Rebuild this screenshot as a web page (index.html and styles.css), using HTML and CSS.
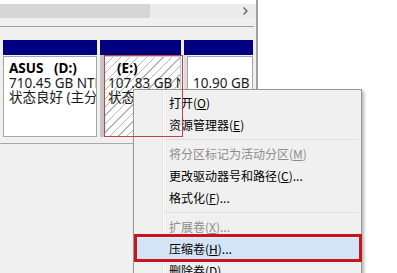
FILE: index.html
```html
<!DOCTYPE html>
<html lang="zh-CN">
<head>
    <meta charset="UTF-8">
    <title>磁盘管理</title>
    <link rel="stylesheet" href="styles.css">
</head>
<body>
    <div class="panel">
        <div class="top-strip"></div>
        <div class="hscroll">
            <div class="thumb"></div>
            <div class="track">
                <svg class="arrow" width="5" height="8" viewBox="0 0 5 8"><path d="M0.5 0.5 L4 4 L0.5 7.5" fill="none" stroke="#606060" stroke-width="1.3"/></svg>
            </div>
        </div>
        <div class="rule"></div>

        <!-- 磁盘分区 -->
        <div class="disk">
            <div class="part part-d">
                <div class="cap"></div>
                <div class="body">
                    <div class="box">
                        <div class="line name">ASUS&nbsp;&nbsp;&nbsp;(D:)</div>
                        <div class="line">710.45 GB NTFS</div>
                        <div class="line">状态良好 (主分区)</div>
                    </div>
                </div>
            </div>
            <div class="part part-e">
                <div class="cap"></div>
                <div class="body">
                    <div class="box hatched">
                        <div class="line name"><span class="indent">(E:)</span></div>
                        <div class="line">107.83 GB NTFS</div>
                        <div class="line">状态良好 (主分区)</div>
                    </div>
                </div>
            </div>
            <div class="part part-f">
                <div class="cap"></div>
                <div class="body">
                    <div class="box">
                        <div class="line name">&nbsp;</div>
                        <div class="line">10.90 GB</div>
                        <div class="line">状态良好</div>
                    </div>
                </div>
            </div>
        </div>
    </div>

    <!-- 右键菜单 -->
    <div class="menu">
        <div class="item">打开(<u>O</u>)</div>
        <div class="item">资源管理器(<u>E</u>)</div>
        <div class="sep"></div>
        <div class="item disabled">将分区标记为活动分区(<u>M</u>)</div>
        <div class="item">更改驱动器号和路径(<u>C</u>)...</div>
        <div class="item">格式化(<u>F</u>)...</div>
        <div class="sep"></div>
        <div class="item disabled">扩展卷(<u>X</u>)...</div>
        <div class="item active">压缩卷(<u>H</u>)...</div>
        <div class="item">删除卷(<u>D</u>)...</div>
    </div>

    <div class="mark-e"></div>
    <div class="mark-item"></div>
</body>
</html>
```

FILE: styles.css
```css
body {
    margin: 0;
    width: 397px;
    height: 273px;
    overflow: hidden;
    background-color: #fff;
    font-family: "Noto Sans", "Noto Sans CJK SC", sans-serif;
    font-size: 12px;
    color: #000;
    position: relative;
}
.panel {
    width: 256px;
    height: 273px;
    background-color: #f0f0f0;
    border-right: 2px solid #a2a2a2;
    display: flex;
    flex-direction: column;
}
.top-strip {
    height: 4px;
    background-color: #fff;
}
.hscroll {
    height: 14px;
    display: flex;
}
.thumb {
    width: 150px;
    background-color: #d6d6d6;
}
.track {
    flex: 1;
    background-color: #ececec;
    display: flex;
    align-items: center;
    justify-content: flex-end;
    padding-right: 8px;
}
.rule {
    width: 254px;
    margin-top: 8px;
    border-top: 1px solid #a0a0a0;
}
.disk {
    display: flex;
    gap: 3px;
    padding-left: 3px;
    margin-top: 13px;
    height: 103px;
    border-bottom: 1px solid #a8a8a8;
    width: 251px;
}
.part {
    display: flex;
    flex-direction: column;
}
.part-d { width: 94px; }
.part-e { width: 81px; }
.part-f { width: 69px; }
.cap {
    height: 15px;
    background-color: #000080;
}
.body {
    height: 82px;
    display: flex;
}
.part-e .body {
    border-left: 4px solid #c4c4c4;
}
.part-f .body {
    border-left: 3px solid #dcdcdc;
}
.box {
    flex: 1;
    background-color: #fff;
    border: 1px solid #a5a5a5;
    padding: 4px 0 0 5px;
    overflow: hidden;
    margin-top: 1px;
}
.hatched {
    border-color: #c9c9c9;
    padding-left: 3px;
    background: repeating-linear-gradient(135deg, #fff 0 5px, #b4b4b4 5px 6px);
}
.line {
    white-space: nowrap;
    font-size: 13.5px;
    line-height: 14.5px;
    color: #1a1a1a;
}
.name {
    font-weight: bold;
    color: #000;
}
.indent {
    padding-left: 9px;
}
.menu {
    position: absolute;
    left: 133px;
    top: 89px;
    width: 227px;
    height: 200px;
    padding-top: 2px;
    background-color: #f0f0f0;
    border: 1px solid #979797;
    box-shadow: 2px 2px 3px rgba(0, 0, 0, 0.3);
    background-image: linear-gradient(to right, transparent 28px, #e2e2e2 28px, #e2e2e2 29px, #fff 29px, #fff 30px, transparent 30px);
    font-family: "Noto Sans CJK SC", sans-serif;
}
.item {
    height: 22px;
    line-height: 22px;
    padding-left: 33px;
    margin: 0 2px;
    color: #000;
}
.item.disabled {
    color: #8d8d8d;
}
.item.active {
    background-color: #d3e4f6;
}
.sep {
    height: 7px;
    margin-left: 30px;
    margin-right: 3px;
    background-image: linear-gradient(#e0e0e0, #e0e0e0);
    background-size: 100% 1px;
    background-position: 0 3px;
    background-repeat: no-repeat;
}
.mark-e {
    position: absolute;
    left: 104px;
    top: 55px;
    width: 77px;
    height: 80px;
    border: 1px solid #c2434f;
}
.mark-item {
    position: absolute;
    left: 134px;
    top: 234px;
    width: 222px;
    height: 22px;
    border: 3px solid #c5161f;
}
```
